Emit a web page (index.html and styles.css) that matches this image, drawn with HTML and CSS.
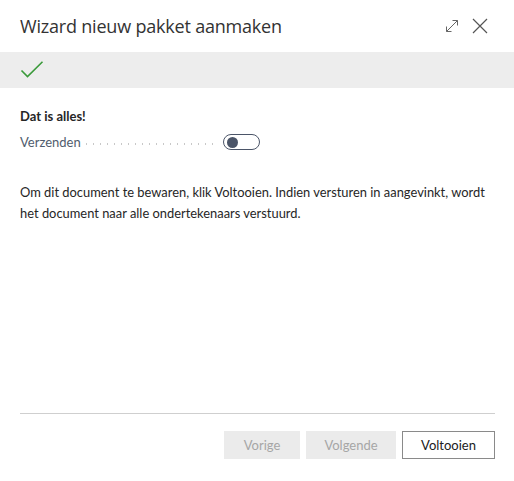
FILE: index.html
```html
<!DOCTYPE html>
<html lang="nl">
<head>
<meta charset="utf-8">
<link rel="stylesheet" href="styles.css">
</head>
<body>
<div class="dialog">
  <header class="header">
    <h1 class="title">Wizard nieuw pakket aanmaken</h1>
    <div class="actions">
      <svg class="icon" width="16" height="16" viewBox="0 0 16 16"><path d="M2.5 13.5 L13.5 2.5 M8.5 2.5 H13.5 V7.5 M2.5 8.5 V13.5 H7.5" fill="none" stroke="#666" stroke-width="1"/></svg>
      <svg class="icon" width="16" height="16" viewBox="0 0 16 16"><path d="M1 1 L15 15 M15 1 L1 15" fill="none" stroke="#555" stroke-width="1.2"/></svg>
    </div>
  </header>
  <div class="band">
    <svg width="24" height="18" viewBox="0 0 24 18"><path d="M1.5 9.5 L7.5 15.5 L22.5 0.8" fill="none" stroke="#3a9a3a" stroke-width="1.6"/></svg>
  </div>
  <main class="content">
    <div class="heading">Dat is alles!</div>
    <div class="field">
      <span class="label">Verzenden</span>
      <span class="dots"></span>
      <span class="toggle"><span class="knob"></span></span>
    </div>
    <p class="text">Om dit document te bewaren, klik Voltooien. Indien versturen in aangevinkt, wordt het document naar alle ondertekenaars verstuurd.</p>
  </main>
  <footer class="footer">
    <button class="btn disabled">Vorige</button>
    <button class="btn disabled wide">Volgende</button>
    <button class="btn primary">Voltooien</button>
  </footer>
</div>
</body>
</html>
```

FILE: styles.css
```css
* { box-sizing: border-box; }
html, body { margin: 0; padding: 0; background: #fff; }
body { font-family: "Lato", "Open Sans", sans-serif; color: #212121; }
.dialog { width: 514px; height: 481px; display: flex; flex-direction: column; }
.header { height: 52px; display: flex; align-items: center; justify-content: space-between; padding: 0 26px 0 20px; }
.title { margin: 0; font-family: "Open Sans", sans-serif; font-size: 18px; font-weight: 400; color: #333; letter-spacing: -0.2px; }
.actions { display: flex; gap: 12px; align-items: center; }
.icon { display: block; }
.band { height: 36px; background: #ededed; display: flex; align-items: center; padding-left: 20px; }
.content { flex: 1; padding: 19px 20px 0 20px; }
.heading { font-size: 13px; font-weight: 700; line-height: 18px; color: #262626; }
.field { display: flex; align-items: center; margin-top: 8px; height: 18px; }
.label { font-size: 13px; color: #505c6d; line-height: 18px; width: 63px; flex: none; }
.dots { flex: none; width: 135px; height: 2px; margin: 3px 5px 0 0; background-image: radial-gradient(circle, #c8c8c8 0.8px, transparent 1px); background-size: 7px 2px; background-repeat: repeat-x; }
.toggle { flex: none; width: 37px; height: 16px; border: 1px solid #4b5568; border-radius: 9px; display: flex; align-items: center; padding-left: 3px; }
.knob { width: 11px; height: 11px; border-radius: 50%; background: #4b5568; }
.text { margin: 31px 0 0 0; font-size: 12.9px; line-height: 21px; color: #262626; }
.footer { margin: 0 19px 0 20px; border-top: 1px solid #cfcfcf; padding: 17px 0 22px 0; display: flex; justify-content: flex-end; gap: 6px; }
.btn { height: 28px; font-family: inherit; font-size: 13px; border: 1px solid transparent; background: #fff; padding: 0; width: 76px; }
.btn.wide { width: 90px; }
.btn.disabled { background: #ebebeb; color: #a6a6a6; border-color: #ebebeb; }
.btn.primary { width: 93px; border: 1px solid #8a8a8a; color: #212121; }
```
